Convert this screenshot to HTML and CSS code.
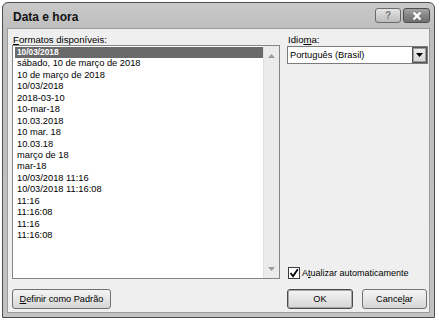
FILE: index.html
```html
<!DOCTYPE html>
<html lang="pt-BR">
<head>
<meta charset="utf-8">
<title>Data e hora</title>
<link rel="stylesheet" href="styles.css">
</head>
<body>
<div class="window">
  <div class="titlebar">
    <span class="title">Data e hora</span>
    <div class="tbtns">
      <span class="tb help">?</span>
      <span class="tb close"><svg width="10" height="8" viewBox="0 0 10 8"><path d="M1.5 0.5 L8.5 7.5 M8.5 0.5 L1.5 7.5" stroke="#fff" stroke-width="2.2" fill="none"/></svg></span>
    </div>
  </div>
  <div class="client">
    <div class="grid">
      <div class="label"><u>F</u>ormatos disponíveis:</div>
      <div class="label">Idio<u>m</u>a:</div>
      <div class="listbox">
        <ul class="items">
          <li class="sel">10/03/2018</li>
          <li>sábado, 10 de março de 2018</li>
          <li>10 de março de 2018</li>
          <li>10/03/2018</li>
          <li>2018-03-10</li>
          <li>10-mar-18</li>
          <li>10.03.2018</li>
          <li>10 mar. 18</li>
          <li>10.03.18</li>
          <li>março de 18</li>
          <li>mar-18</li>
          <li>10/03/2018 11:16</li>
          <li>10/03/2018 11:16:08</li>
          <li>11:16</li>
          <li>11:16:08</li>
          <li>11:16</li>
          <li>11:16:08</li>
        </ul>
        <div class="scrollbar">
          <svg class="arrow" width="7" height="4" viewBox="0 0 7 4"><path d="M0 4 L3.5 0 L7 4 Z" fill="#9a9a9a"/></svg>
          <svg class="arrow" width="7" height="4" viewBox="0 0 7 4"><path d="M0 0 L3.5 4 L7 0 Z" fill="#9a9a9a"/></svg>
        </div>
      </div>
      <div class="right">
        <div class="combo">
          <span class="combo-text">Português (Brasil)</span>
          <span class="drop"><svg width="7" height="4" viewBox="0 0 7 4"><path d="M0 0 L7 0 L3.5 4 Z" fill="#000"/></svg></span>
        </div>
        <div class="check">
          <span class="box"><svg width="10" height="10" viewBox="0 0 10 10"><path d="M1.5 5 L4 8.2 L8.8 1.2" stroke="#000" stroke-width="1.8" fill="none"/></svg></span>
          <span>A<u>t</u>ualizar automaticamente</span>
        </div>
      </div>
      <div class="btnrow btnrow-left">
        <button class="btn wide"><u>D</u>efinir como Padrão</button>
      </div>
      <div class="btnrow btnrow-right">
        <button class="btn default">OK</button>
        <button class="btn">Cance<u>l</u>ar</button>
      </div>
    </div>
  </div>
</div>
</body>
</html>
```
FILE: styles.css
```css
* { box-sizing: border-box; }
html, body { margin: 0; padding: 0; background: #ffffff; }
body {
  font-family: "Liberation Sans", Arial, sans-serif;
  font-size: 9px;
  color: #000;
}
.window {
  margin: 2px 0 0 2px;
  width: 433px;
  height: 316px;
  border: 1px solid #4e4e4e;
  border-radius: 6px 6px 0 0;
  background: linear-gradient(#c9c9c9, #bdbdbd 30px, #c2c2c2);
  display: flex;
  flex-direction: column;
  padding: 0 4px 4px 4px;
}
.titlebar {
  height: 25px;
  display: flex;
  justify-content: space-between;
  align-items: flex-start;
  margin: 0 -4px;
  padding: 0 0 0 10px;
}
.title {
  font-size: 12px;
  font-weight: bold;
  line-height: 13px;
  margin-top: 8px;
  color: #111;
}
.tbtns {
  display: flex;
  gap: 2px;
  margin-top: 5px;
  margin-right: 4px;
}
.tb {
  height: 15px;
  display: flex;
  align-items: center;
  justify-content: center;
  border: 1px solid #6a6a6a;
  border-radius: 3px;
}
.help {
  width: 26px;
  background: linear-gradient(#e6e6e6, #cfcfcf 50%, #bcbcbc);
  color: #7a7a7a;
  font-weight: bold;
  font-size: 10px;
}
.close {
  width: 27px;
  background: linear-gradient(#a5a5a5, #858585 50%, #6f6f6f);
  border-color: #4e4e4e;
}
.client {
  flex: 1;
  background: #efefef;
  border: 1px solid #9c9c9c;
  padding: 0 2px 3px 4px;
}
.grid {
  display: grid;
  grid-template-columns: 268px 141px;
  grid-template-rows: 16px 234px 30px;
  column-gap: 7px;
}
.label {
  padding-top: 5px;
  line-height: 11px;
  padding-left: 1px;
  font-size: 9.6px;
}
.listbox {
  border: 1px solid #858585;
  background: #fff;
  display: flex;
}
.items {
  list-style: none;
  margin: 0;
  padding: 1px 0 0 2px;
  flex: 1;
  font-size: 9.3px;
}
.items li {
  height: 11.44px;
  line-height: 11.44px;
  padding-left: 2px;
  white-space: nowrap;
}
.items li.sel {
  background: #6a6a6a;
  color: #fff;
  font-weight: bold;
  font-size: 8.3px;
}
.scrollbar {
  width: 16px;
  background: #ebebeb;
  border-left: 1px solid #e0e0e0;
  display: flex;
  flex-direction: column;
  justify-content: space-between;
  align-items: center;
  padding: 8px 0 7px;
}
.right {
  display: flex;
  flex-direction: column;
  padding-top: 1px;
}
.combo {
  height: 18px;
  border: 1px solid #7c7c7c;
  background: #fff;
  display: flex;
  align-items: center;
  justify-content: space-between;
  font-size: 9.3px;
  padding-left: 2px;
}
.drop {
  width: 15px;
  height: 16px;
  border: 1px solid #555;
  box-shadow: inset 0 0 0 1px #9a9a9a;
  background: linear-gradient(#eeeeee, #d6d6d6);
  display: flex;
  align-items: center;
  justify-content: center;
}
.check {
  margin-top: auto;
  display: flex;
  align-items: center;
  gap: 2px;
  padding-left: 1px;
  height: 12px;
}
.box {
  width: 12px;
  height: 12px;
  border: 1px solid #3c3c3c;
  background: #fff;
  display: flex;
  align-items: center;
  justify-content: center;
}
.btnrow {
  display: flex;
  height: 30px;
  padding-top: 10px;
}
.btnrow-left { grid-row: 3; grid-column: 1; }
.btnrow-right { grid-row: 3; grid-column: 2; gap: 9px; }
.btn {
  font-family: "Liberation Sans", Arial, sans-serif;
  font-size: 9.2px;
  height: 20px;
  border: 1px solid #707070;
  border-radius: 3px;
  background: linear-gradient(#f4f4f4, #e6e6e6 50%, #d4d4d4);
  color: #000;
  padding: 0;
  width: 65px;
}
.btn.wide { width: 99px; }
.btn.default {
  width: 66px;
  border-color: #4a4a4a;
  box-shadow: inset 0 0 0 1px #a8a8a8;
}
```
